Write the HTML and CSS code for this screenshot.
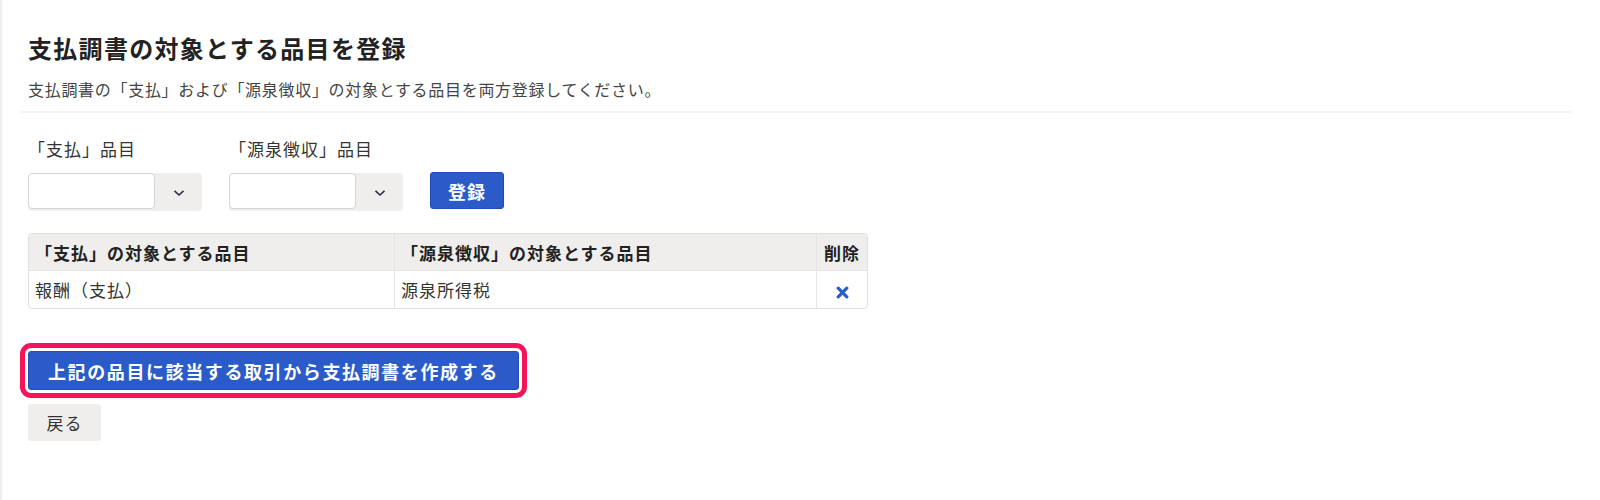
FILE: index.html
```html
<!DOCTYPE html>
<html lang="ja">
<head>
<meta charset="utf-8">
<title>支払調書の対象とする品目を登録</title>
<link rel="stylesheet" href="styles.css">
</head>
<body>
<div class="page">
  <div class="header">
    <h1 class="title">支払調書の対象とする品目を登録</h1>
    <p class="lead">支払調書の「支払」および「源泉徴収」の対象とする品目を両方登録してください。</p>
  </div>
  <div class="content">
    <div class="form-row">
      <div class="field">
        <label class="field-label">「支払」品目</label>
        <div class="select">
          <div class="select-input"></div>
          <div class="select-toggle">
            <svg width="12" height="8" viewBox="0 0 12 8"><path d="M1.5 1.8 L6 6 L10.5 1.8" fill="none" stroke="#2a2f3a" stroke-width="1.6"/></svg>
          </div>
        </div>
      </div>
      <div class="field">
        <label class="field-label">「源泉徴収」品目</label>
        <div class="select">
          <div class="select-input"></div>
          <div class="select-toggle">
            <svg width="12" height="8" viewBox="0 0 12 8"><path d="M1.5 1.8 L6 6 L10.5 1.8" fill="none" stroke="#2a2f3a" stroke-width="1.6"/></svg>
          </div>
        </div>
      </div>
      <button class="btn btn-primary btn-register">登録</button>
    </div>

    <table class="items">
      <thead>
        <tr>
          <th class="c1">「支払」の対象とする品目</th>
          <th class="c2">「源泉徴収」の対象とする品目</th>
          <th class="c3">削除</th>
        </tr>
      </thead>
      <tbody>
        <tr>
          <td>報酬（支払）</td>
          <td>源泉所得税</td>
          <td class="del">
            <svg width="13" height="13" viewBox="0 0 13 13"><path d="M2.2 2.2 L10.8 10.8 M10.8 2.2 L2.2 10.8" stroke="#2a5bcc" stroke-width="3.2" stroke-linecap="round"/></svg>
          </td>
        </tr>
      </tbody>
    </table>

    <div class="actions">
      <button class="btn btn-primary btn-create">上記の品目に該当する取引から支払調書を作成する</button>
      <button class="btn btn-back">戻る</button>
    </div>
  </div>
</div>
</body>
</html>
```

FILE: styles.css
```css
* { box-sizing: border-box; }
html, body { margin: 0; padding: 0; background: #fff; }
body {
  font-family: "Noto Sans CJK JP", "Noto Sans", sans-serif;
  color: #333;
  width: 1600px;
  height: 500px;
  overflow: hidden;
}
.page {
  border-left: 2px solid #efefef;
  height: 500px;
  padding: 0 29px 0 19px;
}
.header {
  border-bottom: 2px solid #f3f3f3;
  padding: 0 7px 10px;
}
.title {
  margin: 0;
  padding-top: 31px;
  font-size: 24px;
  line-height: 34px;
  font-weight: bold;
  letter-spacing: 1.3px;
  color: #222;
}
.lead {
  margin: 12px 0 0;
  font-size: 16px;
  line-height: 24px;
  letter-spacing: 0.7px;
  color: #444;
}
.content {
  padding: 24px 7px 0;
}
.form-row {
  display: flex;
  align-items: flex-end;
  gap: 27px;
}
.field {
  display: flex;
  flex-direction: column;
  gap: 12px;
}
.field-label {
  font-size: 17px;
  line-height: 24px;
  letter-spacing: 1px;
  color: #333;
}
.select {
  display: flex;
  width: 174px;
  height: 38px;
  background: #efeeed;
  border-radius: 4px;
}
.select-input {
  width: 127px;
  height: 36px;
  background: #fff;
  border: 1px solid #d4d4d4;
  border-radius: 4px;
}
.select-toggle {
  flex: 1;
  display: flex;
  align-items: center;
  justify-content: center;
  padding-top: 2px;
}
.btn {
  font-family: inherit;
  cursor: pointer;
  border-radius: 3px;
}
.btn-primary {
  background: #2a5bc9;
  color: #fff;
  border: 1px solid #1f4db5;
  font-weight: bold;
}
.btn-register {
  width: 74px;
  height: 37px;
  font-size: 18px;
  letter-spacing: 1px;
  margin-bottom: 2px;
  padding: 0;
}
.items {
  margin-top: 22px;
  width: 840px;
  border-collapse: separate;
  border-spacing: 0;
  border: 1px solid #dedede;
  border-radius: 4px;
  font-size: 17px;
  letter-spacing: 1px;
}
.items th, .items td {
  text-align: left;
  padding: 0 6px;
  border-left: 1px solid #e4e4e4;
}
.items th:first-child, .items td:first-child { border-left: none; }
.items th {
  height: 37px;
  background: #efeeed;
  font-weight: bold;
  color: #222;
  border-bottom: 1px solid #e4e4e4;
}
.items thead th:first-child { border-top-left-radius: 3px; }
.items thead th:last-child { border-top-right-radius: 3px; }
.items td {
  height: 37px;
  color: #333;
}
.items .c1 { width: 365px; }
.items .c2 { width: 422px; }
.items .c3 { text-align: center; padding: 0; }
.items .del { text-align: center; padding: 0; }
.items .del svg { display: inline-block; vertical-align: middle; }
.actions {
  margin-top: 42px;
  display: flex;
  flex-direction: column;
  align-items: flex-start;
  gap: 14px;
}
.btn-create {
  height: 39px;
  padding: 0 19px 0 19px;
  font-size: 18px;
  letter-spacing: 1.6px;
  outline: 5px solid #f5145a;
  outline-offset: 3px;
  border-radius: 3px;
}
.btn-back {
  width: 73px;
  height: 37px;
  background: #efeeed;
  border: none;
  color: #333;
  font-size: 17px;
  letter-spacing: 1px;
  padding: 0;
}
```
